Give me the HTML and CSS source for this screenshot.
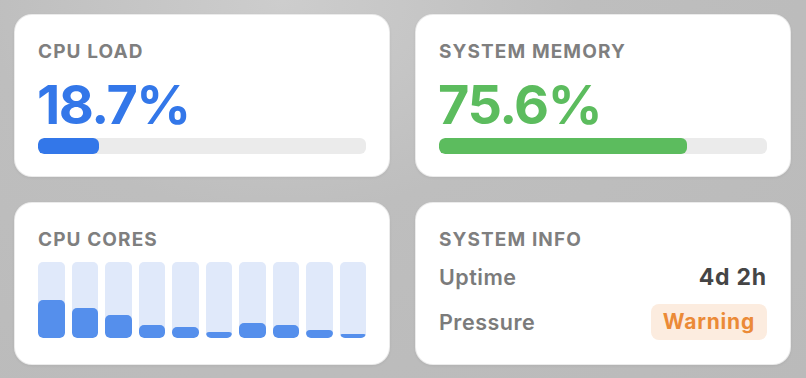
FILE: index.html
```html
<!DOCTYPE html>
<html lang="en">
  <head>
    <meta charset="UTF-8" />
    <meta name="viewport" content="width=device-width, initial-scale=1.0" />
    <title>System Monitor</title>
    <link rel="stylesheet" href="styles.css">
  </head>
  <body>
    <div class="dashboard">
      <div class="card">
        <h3 class="label">CPU LOAD</h3>
        <p class="big-value blue">18.7%</p>
        <div class="meter"><div class="meter-fill blue-fill" style="width: 18.7%"></div></div>
      </div>

      <div class="card">
        <h3 class="label">SYSTEM MEMORY</h3>
        <p class="big-value green">75.6%</p>
        <div class="meter"><div class="meter-fill green-fill" style="width: 75.6%"></div></div>
      </div>

      <div class="card">
        <h3 class="label">CPU CORES</h3>
        <div class="cores">
          <div class="core"><div class="core-fill" style="height: 50%"></div></div>
          <div class="core"><div class="core-fill" style="height: 39%"></div></div>
          <div class="core"><div class="core-fill" style="height: 30%"></div></div>
          <div class="core"><div class="core-fill" style="height: 17%"></div></div>
          <div class="core"><div class="core-fill" style="height: 14%"></div></div>
          <div class="core"><div class="core-fill" style="height: 8%"></div></div>
          <div class="core"><div class="core-fill" style="height: 20%"></div></div>
          <div class="core"><div class="core-fill" style="height: 17%"></div></div>
          <div class="core"><div class="core-fill" style="height: 10%"></div></div>
          <div class="core"><div class="core-fill" style="height: 5%"></div></div>
        </div>
      </div>

      <div class="card">
        <h3 class="label">SYSTEM INFO</h3>
        <div class="info-row">
          <span class="info-key">Uptime</span>
          <span class="info-value">4d 2h</span>
        </div>
        <div class="info-row">
          <span class="info-key">Pressure</span>
          <span class="badge">Warning</span>
        </div>
      </div>
    </div>
  </body>
</html>
```

FILE: styles.css
```css
body {
  margin: 0;
  height: 378px;
  overflow: hidden;
  font-family: Inter, "Noto Sans", sans-serif;
  background: radial-gradient(ellipse at 35% 0%, #cdcdcd 0%, #bebebe 40%, #bababa 100%);
}
.dashboard {
  display: grid;
  grid-template-columns: 376px 376px;
  grid-auto-rows: 163px;
  gap: 25px;
  padding: 14px 15px 13px 14px;
}
.card {
  background: #fff;
  border: 1px solid rgba(0, 0, 0, 0.08);
  border-radius: 18px;
  box-shadow: 0 1px 3px rgba(0, 0, 0, 0.06);
  padding: 27px 23px 0 23px;
  display: flex;
  flex-direction: column;
}
.label {
  margin: 0;
  font-size: 19px;
  line-height: 19px;
  font-weight: 700;
  letter-spacing: 1.1px;
  color: #7f7f7f;
}
.big-value {
  margin: 17px 0 0 -1px;
  font-size: 54px;
  line-height: 54px;
  font-weight: 700;
  letter-spacing: -1.5px;
}
.blue {
  color: #3377e9;
}
.green {
  color: #5cbc5e;
}
.meter {
  margin-top: 6px;
  height: 16px;
  border-radius: 6px;
  background: #ebebeb;
  overflow: hidden;
}
.meter-fill {
  height: 100%;
  border-radius: 6px;
}
.blue-fill {
  background: #3377e9;
}
.green-fill {
  background: #5cbc5e;
}
.cores {
  margin-top: 13px;
  height: 76px;
  display: grid;
  grid-template-columns: repeat(10, 1fr);
  gap: 7px;
}
.core {
  background: #e0e9fa;
  border-radius: 5px;
  display: flex;
  align-items: flex-end;
  overflow: hidden;
}
.core-fill {
  width: 100%;
  background: #558fec;
  border-radius: 5px;
}
.info-row {
  display: flex;
  justify-content: space-between;
  align-items: center;
  height: 36px;
}
.info-row + .info-row {
  margin-top: 9px;
}
.label + .info-row {
  margin-top: 10px;
}
.info-key {
  font-size: 21.5px;
  font-weight: 600;
  letter-spacing: 0.5px;
  color: #7b7b7b;
}
.info-value {
  font-size: 23px;
  font-weight: 700;
  letter-spacing: 0.8px;
  color: #454545;
}
.badge {
  font-size: 21px;
  font-weight: 700;
  letter-spacing: 0.8px;
  color: #eb8a37;
  background: #fcecdf;
  border-radius: 8px;
  padding: 0 12px;
  height: 36px;
  line-height: 36px;
}
```
